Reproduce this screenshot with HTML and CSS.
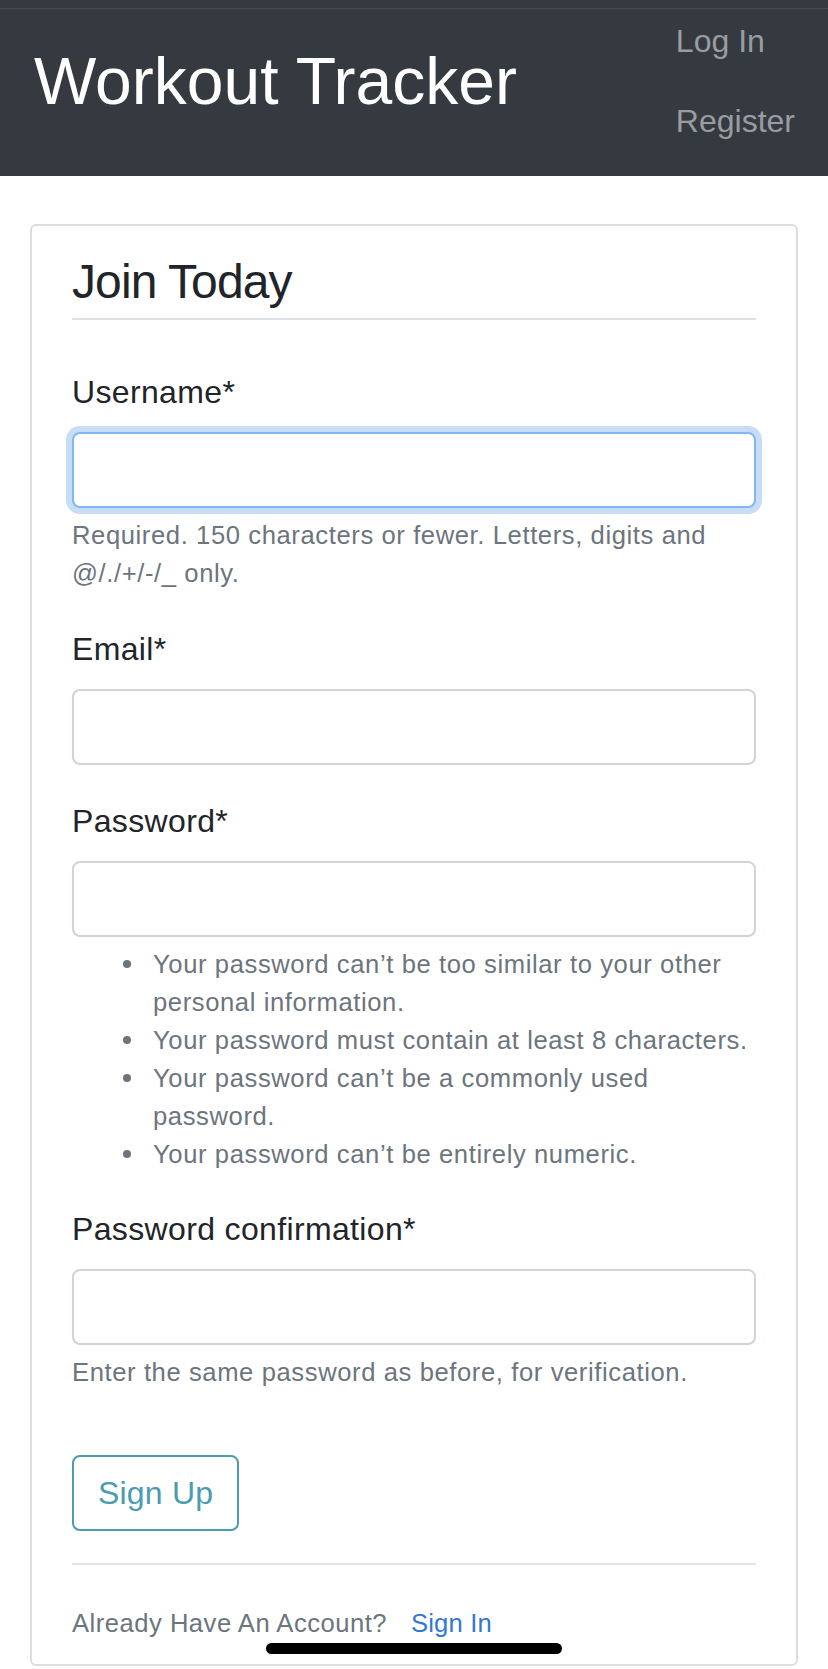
FILE: index.html
```html
<!DOCTYPE html>
<html lang="en">
<head>
<meta charset="utf-8">
<title>Workout Tracker - Register</title>
<link rel="stylesheet" href="styles.css">
</head>
<body>
<header class="site-header">
  <a class="brand" href="#">Workout Tracker</a>
  <nav class="nav">
    <a class="nav-link" href="#">Log In</a>
    <a class="nav-link" href="#">Register</a>
  </nav>
</header>

<main class="main">
  <section class="content-section">
    <form class="form">
      <div class="fields">
        <h2 class="legend">Join Today</h2>

        <div class="group">
          <label class="label">Username*</label>
          <div class="input focused"></div>
          <small class="form-text">Required. 150 characters or fewer. Letters, digits and @/./+/-/_ only.</small>
        </div>

        <div class="group">
          <label class="label">Email*</label>
          <div class="input"></div>
        </div>

        <div class="group">
          <label class="label">Password*</label>
          <div class="input"></div>
          <small class="form-text">
            <ul class="rules">
              <li>Your password can’t be too similar to your other personal information.</li>
              <li>Your password must contain at least 8 characters.</li>
              <li>Your password can’t be a commonly used password.</li>
              <li>Your password can’t be entirely numeric.</li>
            </ul>
          </small>
        </div>

        <div class="group">
          <label class="label">Password confirmation*</label>
          <div class="input"></div>
          <small class="form-text">Enter the same password as before, for verification.</small>
        </div>
      </div>

      <div class="submit-group">
        <button class="btn-outline" type="button">Sign Up</button>
      </div>
    </form>

    <div class="footer-row">
      <small class="muted">Already Have An Account?</small> <a class="signin" href="#">Sign In</a>
    </div>
  </section>
</main>

<div class="home-indicator"></div>
</body>
</html>
```

FILE: styles.css
```css
html, body {
  margin: 0;
  padding: 0;
  background: #ffffff;
}

body {
  position: relative;
  min-height: 1669px;
  font-family: "Liberation Sans", Arial, sans-serif;
  font-size: 32px;
  line-height: 48px;
  color: #212529;
}

a { text-decoration: none; }

/* ---------- Header ---------- */
.site-header {
  height: 176px;
  box-sizing: border-box;
  background-color: #343a40;
  background-image: linear-gradient(to bottom, transparent 8px, rgba(255,255,255,0.09) 8px, rgba(255,255,255,0.09) 9px, transparent 9px);
  display: flex;
  justify-content: space-between;
  align-items: flex-start;
  padding: 0 33px 0 34px;
}

.brand {
  margin-top: 41px;
  font-size: 66px;
  line-height: 80px;
  letter-spacing: 0;
  color: #ffffff;
  white-space: nowrap;
}

.nav {
  margin-top: 1px;
  display: flex;
  flex-direction: column;
  align-items: flex-start;
}

.nav-link {
  display: block;
  padding: 16px 0;
  font-size: 32px;
  line-height: 48px;
  color: #9a9da0;
}

/* ---------- Card ---------- */
.main {
  padding: 48px 30px 0;
}

.content-section {
  border: 2px solid #dddddd;
  border-radius: 6px;
  padding: 20px 40px 17px;
  background: #ffffff;
}

.fields {
  display: flow-root;
  margin-bottom: 32px;
}

.legend {
  margin: 0 0 48px;
  padding: 0;
  font-size: 48px;
  line-height: 72px;
  font-weight: 400;
  letter-spacing: -0.9px;
  color: #212529;
  border-bottom: 2px solid #dee2e6;
}

.group {
  margin-bottom: 32px;
}

.label {
  display: block;
  margin-bottom: 16px;
  font-size: 32px;
  line-height: 48px;
  letter-spacing: 0.35px;
  color: #212529;
}

.input {
  height: 76px;
  box-sizing: border-box;
  border: 2px solid #ced4da;
  border-radius: 8px;
  background: #ffffff;
}

.input.focused {
  border-color: #84b6f0;
  box-shadow: 0 0 0 6px #c7dcf5;
}

.form-text {
  display: block;
  margin-top: 8px;
  font-size: 25.6px;
  line-height: 38.4px;
  letter-spacing: 0.6px;
  color: #6c757d;
}

.rules {
  margin: 0 0 32px;
  padding-left: 81px;
  line-height: 38px;
  list-style: none;
}

.rules li {
  position: relative;
}

.rules li::before {
  content: "";
  position: absolute;
  left: -30px;
  top: 15px;
  width: 8px;
  height: 8px;
  border-radius: 50%;
  background: #6c757d;
}

.submit-group {
  margin-bottom: 32px;
}

.btn-outline {
  display: inline-block;
  height: 76px;
  box-sizing: border-box;
  padding: 0 24px;
  border: 2px solid #4a9cae;
  border-radius: 8px;
  background: transparent;
  font-family: "Liberation Sans", Arial, sans-serif;
  font-size: 32px;
  line-height: 72px;
  letter-spacing: 0.2px;
  color: #4a9cae;
}

.footer-row {
  border-top: 2px solid #e2e4e6;
  padding-top: 32px;
  font-size: 32px;
  line-height: 48px;
}

.muted {
  font-size: 25.6px;
  letter-spacing: 0.5px;
  color: #6c757d;
}

.signin {
  margin-left: 15px;
  font-size: 25.6px;
  letter-spacing: 0.2px;
  color: #3178d8;
}

/* ---------- iOS home indicator (overlay) ---------- */
.home-indicator {
  position: absolute;
  left: 266px;
  top: 1643px;
  width: 296px;
  height: 11px;
  border-radius: 6px;
  background: #000000;
}
```
